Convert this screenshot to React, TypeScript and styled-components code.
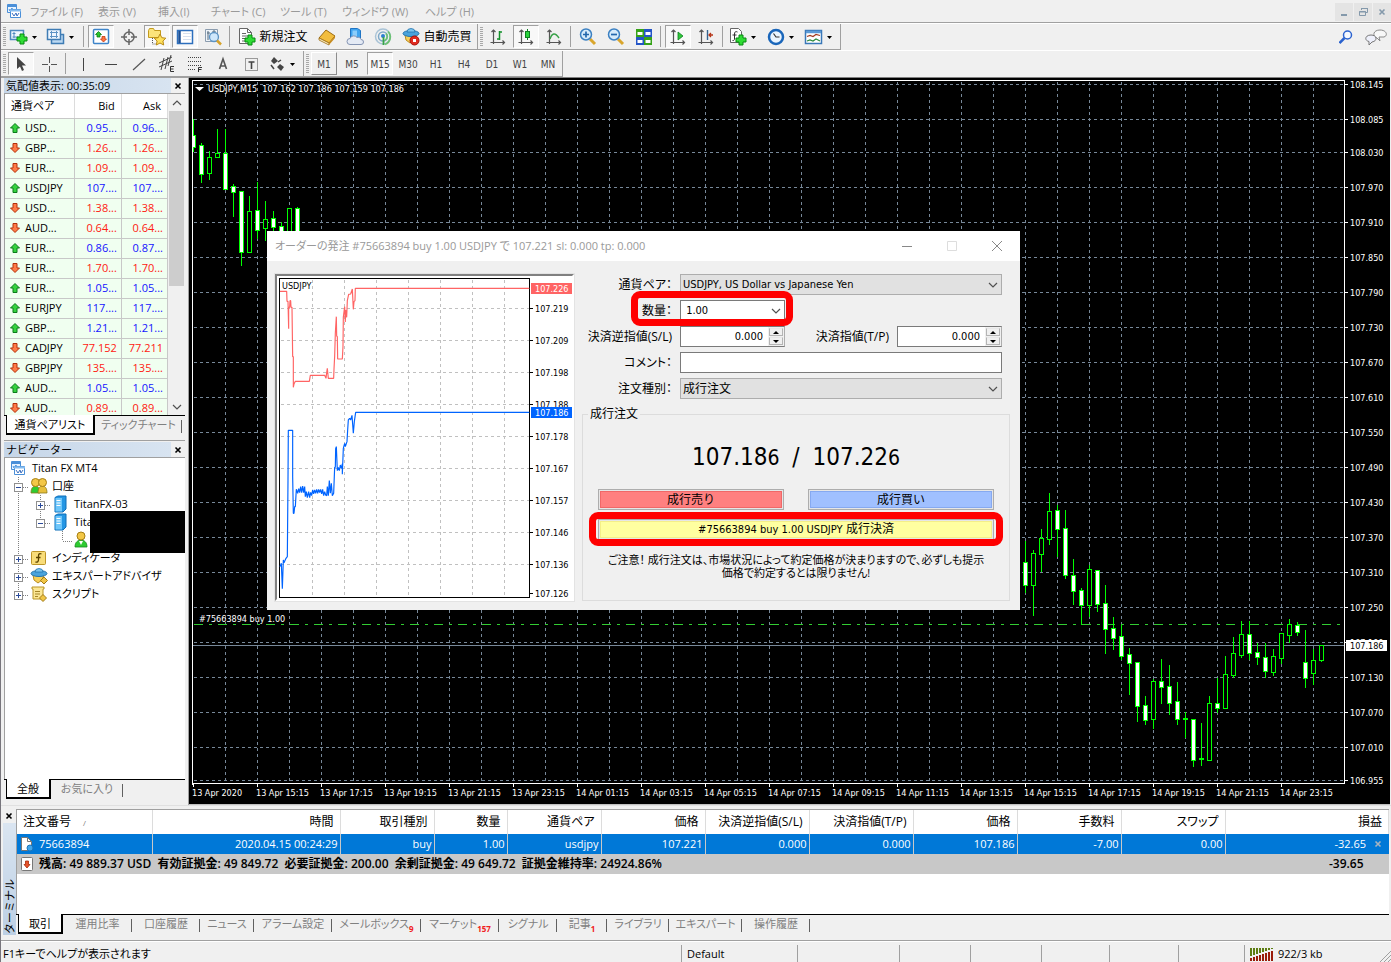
import React, { ReactNode } from "react";
import styled, { createGlobalStyle, css } from "styled-components";

const UI = `"Open Sans", "Noto Sans CJK JP", sans-serif`;
const TAHOMA = `"DejaVu Sans Condensed", "Noto Sans CJK JP", sans-serif`;

const GlobalStyle = createGlobalStyle`
  * { box-sizing: border-box; }
  body { margin: 0; background: #f0f0f0; color: #000; font: 12px/16px ${UI}; font-feature-settings: "palt"; overflow: hidden; }
  button, input, select { font: inherit; font-feature-settings: inherit; color: inherit; margin: 0; }
  svg { display: block; flex: none; }
`;

/* ---------- Shell ---------- */

const Shell = styled.div`
  display: flex;
  flex-direction: column;
  height: 100vh;
  border-left: 1px solid #77757c;
`;

const MenuBar = styled.nav`
  display: flex;
  align-items: center;
  height: 23px;
  padding-left: 5px;
  border-bottom: 1px solid #a0a0a0;
`;

const MenuItem = styled.button<{ $w: number }>`
  width: ${(p) => p.$w}px;
  padding: 2px 0 0;
  border: 0;
  background: none;
  color: #9a9a9a;
  font-size: 11px;
  text-align: left;
  white-space: nowrap;
`;

const MenuIcon = styled.span`
  width: 24px;
`;

const WindowButtons = styled.div`
  display: flex;
  gap: 1px;
  margin-left: auto;
  padding-top: 2px;
`;

const WindowButton = styled.button`
  display: grid;
  place-items: center;
  width: 18px;
  height: 18px;
  padding: 0;
  border: 0;
  background: #e4e4e4;
`;

const ToolRow = styled.div`
  display: flex;
  height: 27px;
  border-top: 1px solid #fff;
`;

const ToolBar = styled.div`
  display: flex;
  align-items: center;
  border-right: 1px solid #a0a0a0;
  border-bottom: 1px solid #a0a0a0;
`;

const Grip = styled.span`
  width: 3px;
  height: 19px;
  margin: 0 1px 0 2px;
  background: repeating-linear-gradient(#a8a8a8 0 1px, #f0f0f0 1px 2px);
`;

const Divider = styled.span`
  width: 1px;
  height: 21px;
  margin: 0 3px 0 2px;
  background: #a0a0a0;
`;

const ToolButton = styled.button<{ $w?: number; $pressed?: boolean; $raised?: boolean; $menu?: boolean }>`
  display: flex;
  align-items: center;
  justify-content: ${(p) => (p.$menu ? "flex-start" : "center")};
  gap: 3px;
  width: ${(p) => p.$w ?? (p.$menu ? 36 : 26)}px;
  height: 23px;
  margin: 0 1px;
  padding: 0;
  border: 1px solid transparent;
  background: none;
  white-space: nowrap;
  ${(p) => p.$pressed && css`
    background: #f8f8f8;
    border-color: #a0a0a0 #fff #fff #a0a0a0;
  `}
  ${(p) => p.$raised && css`
    border-color: #fff #8c8c8c #8c8c8c #fff;
  `}
`;

const PeriodButton = styled(ToolButton)`
  padding-top: 2px;
  color: #444;
  font: 10px/14px ${TAHOMA};
`;

const RowTools = styled.div`
  display: flex;
  align-items: center;
  gap: 12px;
  margin-left: auto;
  padding-right: 4px;
`;

const PlainButton = styled.button`
  padding: 0;
  border: 0;
  background: none;
`;

const Main = styled.main`
  display: flex;
  flex: 1;
  min-height: 0;
`;

/* ---------- Side panes ---------- */

const Side = styled.aside`
  display: flex;
  flex-direction: column;
  width: 188px;
  padding: 0 3px;
  border-top: 1px solid #a0a0a0;
  border-right: 1px solid #a0a0a0;
`;

const Pane = styled.section<{ $grow?: boolean }>`
  display: flex;
  flex-direction: column;
  position: relative;
  min-height: 0;
  ${(p) => (p.$grow ? css`flex: 1; padding-bottom: 5px;` : css`height: 363px; border-bottom: 1px solid #a0a0a0; margin-bottom: 1px; padding-bottom: 4px;`)}
`;

const PaneTitle = styled.h2`
  display: flex;
  align-items: center;
  height: 15px;
  margin: 0;
  font: 11px/15px ${UI};
`;

const PaneTitleText = styled.span`
  flex: 1;
  padding-left: 2px;
  background: linear-gradient(90deg, #c6d6e8, #d8e4f1);
  white-space: nowrap;
`;

const CloseMark = styled.button`
  display: grid;
  place-items: center;
  width: 14px;
  height: 14px;
  padding: 0;
  border: 0;
  background: none;
`;

const PaneBody = styled.div`
  display: flex;
  align-items: flex-start;
  flex: 1;
  min-height: 0;
  overflow: hidden;
  background: #fff;
  border-top: 1px solid #a0a0a0;
  border-left: 1px solid #a0a0a0;
`;

const Quotes = styled.table`
  flex: 1;
  table-layout: fixed;
  border-collapse: collapse;
  width: 163px;
  font-size: 11px;
`;

const QuoteHead = styled.th<{ $w: number; $left?: boolean }>`
  width: ${(p) => p.$w}px;
  height: 24px;
  padding: 0 6px;
  border-right: 1px solid #dcdcdc;
  border-bottom: 1px solid #c8c8c8;
  font-weight: 400;
  text-align: ${(p) => (p.$left ? "left" : "right")};
`;

const QuoteCell = styled.td<{ $tone?: "up" | "down" }>`
  height: 20px;
  padding: 0 4px 0 0;
  border-right: 1px solid #c8c8c8;
  border-bottom: 1px solid #c8c8c8;
  background: #f0fff0;
  color: ${(p) => (p.$tone === "up" ? "#1414ff" : p.$tone === "down" ? "#ff2010" : "#000")};
  line-height: 14px;
  text-align: ${(p) => (p.$tone ? "right" : "left")};
`;

const Symbol = styled.span`
  display: flex;
  align-items: center;
  gap: 4px;
  padding-left: 4px;
`;

const ScrollBar = styled.div`
  display: flex;
  flex-direction: column;
  align-items: center;
  align-self: stretch;
  width: 17px;
  background: #f0f0f0;
`;

const ScrollThumb = styled.div`
  width: 15px;
  height: 175px;
  margin-bottom: auto;
  background: #cdcdcd;
`;

const ScrollArrow = styled.button`
  display: grid;
  place-items: center;
  width: 17px;
  height: 17px;
  padding: 0;
  border: 0;
  background: none;
`;

const TabStrip = styled.div`
  display: flex;
  height: 21px;
  padding-left: 2px;
  background: linear-gradient(#000 0 1px, #f0f0f0 1px);
`;

const Tab = styled.button<{ $w: number; $active?: boolean }>`
  display: flex;
  align-items: center;
  justify-content: center;
  position: relative;
  width: ${(p) => p.$w}px;
  height: 20px;
  padding: 0;
  border: 0;
  background: none;
  color: #808080;
  font-size: 11px;
  line-height: 16px;
  white-space: nowrap;
  &::after {
    content: "";
    position: absolute;
    right: 0;
    top: 5px;
    height: 13px;
    border-right: 1px solid #606060;
  }
  ${(p) => p.$active && css`
    padding-top: 2px;
    background: #fff;
    color: #000;
    border: 1px solid #000;
    border-width: 0 2px 2px 1px;
    &::after { display: none; }
  `}
`;

const TabCount = styled.sub`
  align-self: flex-end;
  color: #f02020;
  font: 700 8px/10px ${UI};
`;

const Tree = styled.ul`
  flex: 1;
  margin: 0;
  padding: 1px 0 0 3px;
  list-style: none;
`;

const TreeRow = styled.li`
  display: flex;
  align-items: center;
  height: 18px;
  font-size: 11px;
  white-space: nowrap;
`;

const TreeText = styled.span`
  padding-left: 4px;
`;

const RootIcon = styled.span`
  padding: 0 2px;
`;

const Redaction = styled.div`
  position: absolute;
  top: 69px;
  left: 86px;
  right: 0;
  height: 42px;
  background: #000;
`;

/* ---------- Chart ---------- */

const ChartPane = styled.section`
  position: relative;
  flex: 1;
  min-width: 0;
  margin-right: 1px;
  background: #000;
  border-top: 1px solid #808080;
  border-bottom: 1px solid #c0c0c0;
`;

const ChartSvg = styled.svg`
  width: 100%;
  height: 100%;
  font: 9px ${TAHOMA};
  fill: #fff;
`;

/* ---------- Order dialog ---------- */

const Dialog = styled.section`
  position: absolute;
  left: 78px;
  top: 153px;
  width: 753px;
  background: #f0f0f0;
`;

const DialogTitle = styled.header`
  display: flex;
  align-items: center;
  height: 30px;
  padding: 0 16px 0 8px;
  background: #fff;
  color: #999;
  font-size: 11px;
`;

const DialogName = styled.h1`
  flex: 1;
  margin: 0;
  font: inherit;
`;

const DialogControls = styled.div`
  display: flex;
  gap: 31px;
`;

const DialogBody = styled.form`
  display: grid;
  grid-template-columns: 299px 1fr;
  column-gap: 8px;
  padding: 13px 10px 9px 8px;
  font-size: 11px;
`;

const TickPane = styled.div`
  border: 2px solid;
  border-color: #808080 #fff #fff #808080;
  outline: 1px solid #e3e3e3;
  background: #fff;
`;

const TickSvg = styled.svg`
  width: 100%;
  height: 323px;
  font: 9px ${TAHOMA};
`;

const OrderSide = styled.div`
  display: flex;
  flex-direction: column;
`;

const Fields = styled.div`
  display: grid;
  grid-template-columns: 90px 105px 1fr 105px;
  grid-auto-rows: 21px;
  gap: 5px 8px;
  padding-right: 8px;
  margin-bottom: 8px;
  position: relative;
`;

const FieldLabel = styled.label<{ $start?: boolean }>`
  ${(p) => p.$start && css`grid-column: 1;`}
  align-self: center;
  text-align: right;
  font-size: 12px;
  white-space: nowrap;
`;

const Picker = styled.span<{ $wide?: boolean; $plain?: boolean }>`
  display: grid;
  align-items: center;
  grid-column: ${(p) => (p.$wide ? "2 / 5" : "2")};
  background: ${(p) => (p.$plain ? "#fff" : "#e1e1e1")};
  border: 1px solid ${(p) => (p.$plain ? "#7a7a7a" : "#adadad")};
  > * { grid-area: 1 / 1; }
  > svg { justify-self: end; margin-right: 3px; pointer-events: none; }
`;

const PickerSelect = styled.select<{ $small?: boolean }>`
  appearance: none;
  width: 100%;
  height: 19px;
  padding: 0 2px;
  border: 0;
  background: none;
  font: ${(p) => (p.$small ? 11 : 12)}px/16px ${TAHOMA};
`;

const TextInput = styled.input`
  grid-column: 2 / 5;
  padding: 0 4px;
  border: 1px solid #7a7a7a;
  background: #fff;
`;

const Spinner = styled.span`
  display: flex;
  background: #fff;
  border: 1px solid #7a7a7a;
  border-right-color: #adadad;
`;

const SpinInput = styled.input`
  flex: 1;
  width: 0;
  min-width: 0;
  padding: 0 5px;
  border: 0;
  background: none;
  font: 11px/16px ${TAHOMA};
  text-align: right;
`;

const SpinButtons = styled.span`
  display: grid;
  grid-template-rows: 1fr 1fr;
  gap: 1px;
  width: 16px;
  padding: 1px;
  background: #f0f0f0;
`;

const SpinButton = styled.button`
  display: grid;
  place-items: center;
  padding: 0;
  min-height: 0;
  border: 1px solid #b4b4b4;
  border-top-color: #e8e8e8;
  background: #f0f0f0;
`;

const OrderGroup = styled.fieldset`
  flex: 1;
  margin: 0;
  padding: 19px 15px 0;
  border: 1px solid #dcdcdc;
`;

const OrderLegend = styled.legend`
  margin-left: -10px;
  padding: 0 2px;
  font-size: 12px;
  line-height: 14px;
`;

const Quote = styled.p`
  margin: 0;
  padding-bottom: 14px;
  text-align: center;
  font: 24px/34px ${TAHOMA};
  small { font-size: 21px; }
`;

const Slash = styled.span`
  padding: 0 6px;
`;

const DealRow = styled.div`
  display: grid;
  grid-template-columns: 1fr 1fr;
  gap: 24px;
  margin-bottom: 9px;
`;

const DealButton = styled.button<{ $tone: string; $edge: string }>`
  width: 100%;
  height: 21px;
  padding: 0;
  border: 1px solid #adadad;
  box-shadow: inset 0 0 0 1px #e6e6e6, inset 0 0 0 2px ${(p) => p.$edge};
  background: ${(p) => p.$tone};
  font: 12px/16px ${TAHOMA};
`;

const Latin = styled.span`
  font-size: 11px;
`;

const CloseDeal = styled.div`
  position: relative;
`;

const Marker = styled.span`
  position: absolute;
  border: 7px solid #f00;
  border-radius: 9px;
  pointer-events: none;
`;

const VolumeMarker = styled(Marker)`
  left: 49px;
  top: 17px;
  width: 162px;
  height: 35px;
`;

const CloseMarker = styled(Marker)`
  inset: -7px -9px -6px -9px;
`;

const Caution = styled.p`
  margin: 13px 0 0;
  text-align: center;
  font-size: 11px;
  line-height: 13px;
  white-space: nowrap;
`;

/* ---------- Terminal ---------- */

const Terminal = styled.section`
  display: flex;
  height: 135px;
  padding: 3px 2px 5px 1px;
  border-top: 1px solid #e0e0e0;
`;

const TerminalRail = styled.div`
  display: flex;
  flex-direction: column;
  align-items: center;
  width: 14px;
`;

const TerminalName = styled.h2`
  flex: 1;
  width: 13px;
  margin: 0;
  padding-top: 1px;
  background: linear-gradient(#bccfe4, #dae5f1);
  writing-mode: vertical-rl;
  text-orientation: sideways;
  transform: rotate(180deg);
  font: 11px/13px ${UI};
  text-align: left;
`;

const TerminalBody = styled.div`
  display: flex;
  flex-direction: column;
  flex: 1;
  min-width: 0;
  border-top: 1px solid #a0a0a0;
`;

const TradeArea = styled.div`
  flex: 1;
  min-height: 0;
  background: #fff;
  border-left: 1px solid #a0a0a0;
`;

const Trades = styled.table`
  width: 100%;
  table-layout: fixed;
  border-collapse: collapse;
  font-size: 11px;
`;

const TradeHead = styled.th<{ $left?: boolean }>`
  height: 24px;
  padding: 0 6px;
  border-right: 1px solid #dcdcdc;
  font-size: 12px;
  font-weight: 400;
  text-align: ${(p) => (p.$left ? "left" : "right")};
  white-space: nowrap;
`;

const TradeCell = styled.td<{ $last?: boolean; $left?: boolean }>`
  height: 20px;
  padding: 0 ${(p) => (p.$last ? 6 : 2)}px 0 3px;
  background: #0078d7;
  color: #fff;
  border-right: 1px solid ${(p) => (p.$last ? "#0078d7" : "#c8c8c8")};
  text-align: ${(p) => (p.$left ? "left" : "right")};
`;

const TotalCell = styled.td<{ $right?: boolean }>`
  height: 20px;
  padding: 0 ${(p) => (p.$right ? 25 : 0)}px 0 3px;
  background: #c8c8c8;
  font-size: 12px;
  font-weight: 600;
  text-align: ${(p) => (p.$right ? "right" : "left")};
`;

const CellContent = styled.span<{ $end?: boolean }>`
  display: flex;
  align-items: center;
  justify-content: ${(p) => (p.$end ? "flex-end" : "flex-start")};
  gap: ${(p) => (p.$end ? 8 : 5)}px;
  white-space: pre;
`;

const SortMark = styled.span`
  margin-left: 12px;
  color: #808080;
  font-size: 8px;
`;

const StatusBar = styled.footer`
  display: flex;
  align-items: stretch;
  height: 22px;
  border-top: 1px solid #a0a0a0;
  padding: 4px 0 0 2px;
  box-shadow: inset 0 1px #fff;
`;

const StatusCell = styled.span<{ $w?: number }>`
  display: flex;
  align-items: center;
  gap: 4px;
  ${(p) => (p.$w ? css`width: ${p.$w}px; padding-left: 5px; border-left: 1px solid #a0a0a0;` : css`flex: 1;`)}
  font-size: 11px;
  white-space: nowrap;
`;

const SizeGrip = styled.span`
  margin: auto 0 0 auto;
`;

/* ---------- Icons ---------- */

const Svg = ({ w = 20, h = 20, children }: { w?: number; h?: number; children: ReactNode }) => (
  <svg width={w} height={h} viewBox={`0 0 ${w} ${h}`} fill="none" aria-hidden="true">{children}</svg>
);

const Plus = ({ x, y }: { x: number; y: number }) => (
  <path d={`M${x + 3} ${y}h4v3h3v4h-3v3h-4v-3h-3v-4h3z`} fill="#2fdc34" stroke="#078a10" />
);

const Caret = () => <Svg w={6} h={20}><path d="M0 9h5l-2.500 3z" fill="#000" /></Svg>;

const AppIcon = () => (
  <Svg w={16} h={16}>
    <path d="M1.500 1.500h9v8h-9z" fill="#e8f3ff" stroke="#4a8fd8" /><path d="M1 3h10" stroke="#4a8fd8" strokeWidth="2" />
    <path d="M3 6l1 2 2-3 1 3" stroke="#4a8fd8" />
    <path d="M4.500 6.500h10v8h-10z" fill="#fff" stroke="#4a8fd8" /><path d="M4 7.500h11" stroke="#86bdf0" strokeWidth="2" />
    <path d="M6 10l2 3 2-3 1 3 2-3" stroke="#3a6fc0" />
  </Svg>
);
const NewChart = () => (
  <Svg><path d="M1.500 3.500h13v9h-13z" fill="#eef6ff" stroke="#4d88bf" strokeWidth="1.500" /><path d="M5 5v6M3.500 6.500h3M3.500 10h6" stroke="#4d88bf" /><Plus x={8} y={7} /></Svg>
);
const Profiles = () => (
  <Svg><path d="M5.500 7.500h12v9h-12z" fill="#bcd9f2" stroke="#3f7cb4" strokeWidth="1.500" /><path d="M1.500 2.500h13v10h-13z" fill="#eef6ff" stroke="#3f7cb4" strokeWidth="1.500" /><path d="M4 5.500h8M4 9.500h8M5.500 4v7M10.500 4v7" stroke="#5d93c5" /></Svg>
);
const WatchIcon = () => (
  <Svg><rect x="2.500" y="2.500" width="15" height="14" rx="1" fill="#fff" stroke="#3d84c9" strokeWidth="1.500" />
    <path d="M7.500 4.500l3 3h-1.500V10H6V7.500H4.500z" fill="#29c52d" stroke="#0b7c12" strokeWidth=".8" /><path d="M12.500 15l-3-3H11V9.500h3V12h1.500z" fill="#ff7440" stroke="#c33a10" strokeWidth=".8" /></Svg>
);
const CrossCircle = () => (
  <Svg><circle cx="10" cy="10" r="5" stroke="#666" strokeWidth="1.500" /><path d="M10 2v6M10 12v6M2 10h6M12 10h6" stroke="#666" strokeWidth="1.500" /></Svg>
);
const NavIcon = () => (
  <Svg><path d="M1.500 3.500l1-2h4l1 2h6v7h-12z" fill="#fbe37a" stroke="#c39a1d" /><path d="M5.500 11v6h4" stroke="#555" strokeDasharray="1 1" />
    <path d="M13 7l1.800 3.700 4 .5-2.900 2.800.8 4-3.700-2-3.700 2 .8-4-2.900-2.800 4-.5z" fill="#ffe15e" stroke="#b98a12" /></Svg>
);
const TerminalIcon = () => (
  <Svg><rect x="2.500" y="3.500" width="15" height="13" fill="#fff" stroke="#2d6fbd" strokeWidth="1.500" /><path d="M4.500 4v12" stroke="#1b4f95" strokeWidth="2.500" /><path d="M8 6.500h8M8 9.500h8M8 12.500h8" stroke="#d6e0ee" /></Svg>
);
const Tester = () => (
  <Svg><path d="M2.500 2.500h12v12h-12z" fill="#eef3f8" stroke="#8b9cae" /><path d="M5 4v9M4 6h3M11 3v4M9 5h4" stroke="#53687d" /><circle cx="11" cy="10" r="4.500" fill="#cbe6fb" fillOpacity=".9" stroke="#5c93c4" strokeWidth="1.300" /><path d="M14 13.500l4 4" stroke="#d6a22a" strokeWidth="2.500" /></Svg>
);
const OrderIcon = () => (
  <Svg w={18}><path d="M1.500 1.500h8l4 4v11h-12z" fill="#fff" stroke="#666" /><path d="M9.500 1.500v4h4M4 6.500h4M4 9h7M4 11.500h6M4 14h4" stroke="#666" /><Plus x={7} y={8} /></Svg>
);
const Book = () => (
  <Svg><path d="M2 11l7-8 9 6-6 7z" fill="#f2bd3e" stroke="#9c6b10" /><path d="M2 11l10 5v2L2 13z" fill="#fff1c2" stroke="#9c6b10" strokeWidth=".8" /><path d="M12 16l6-7v2l-6 7z" fill="#c98b1c" /></Svg>
);
const Cloud = () => (
  <Svg><path d="M5.500 1.500h7l3 2v8h-10z" fill="#3fa3ef" stroke="#1f74c4" /><path d="M7.500 3.500h4.500v6H7.500z" fill="#8bcdfb" /><path d="M5 17.500a3 3 0 010-6 4 4 0 017-1 3 3 0 014 2 2.500 2.500 0 010 5z" fill="#e4eaf4" stroke="#8494b3" /></Svg>
);
const Signal = () => (
  <Svg><circle cx="10" cy="9.500" r="7.500" stroke="#a9c3d6" strokeWidth="1.500" /><circle cx="10" cy="9.500" r="4.500" stroke="#7fa9c9" strokeWidth="1.500" /><path d="M12 17.500a8 8 0 003-13M12 13.500a5 5 0 001-7" stroke="#6cc272" strokeWidth="1.800" /><circle cx="10" cy="9" r="2" fill="#2c7fd0" /><path d="M10.500 10v8" stroke="#39a545" strokeWidth="1.800" /></Svg>
);
const Expert = ({ stop }: { stop?: boolean }) => (
  <Svg w={18} h={stop ? 20 : 18}><path d="M3 8h11l-2 5-4 3-4-3z" fill="#f6cf58" stroke="#b98c1d" /><ellipse cx="9" cy="6.500" rx="8" ry="3" fill="#4aa3dc" stroke="#2374ad" /><path d="M5 5a4 3.500 0 018 0z" fill="#7cc5ee" stroke="#2374ad" strokeWidth=".8" />
    {stop ? <><circle cx="12.500" cy="13.500" r="4.500" fill="#e02b20" stroke="#a80f08" /><path d="M11 12h3v3h-3z" fill="#fff" /></> : <path d="M14 10l3.500 3.500L14 17l-3.500-3.500z" fill="#f0c545" stroke="#a47c17" />}</Svg>
);
const Axes = ({ children }: { children?: ReactNode }) => (
  <Svg><path d="M5.500 3v14M2.500 15.500h14M3.500 5l2-2 2 2M14.500 13.500l2 2-2 2" stroke="#555" strokeWidth="1.200" />{children}</Svg>
);
const BarsIcon = () => <Axes><path d="M11.500 4v9M9 12h2.500M11.500 5H14" stroke="#12902a" strokeWidth="1.500" /></Axes>;
const CandleIcon = () => <Axes><path d="M11.500 2v11" stroke="#0d7f20" /><rect x="9.500" y="4.500" width="4" height="6" fill="#29d33b" stroke="#0d7f20" /></Axes>;
const LineIcon = () => <Axes><path d="M6 12c2-6 5-7 9-1" stroke="#36a046" strokeWidth="1.400" /></Axes>;
const Lens = ({ plus }: { plus?: boolean }) => (
  <Svg><path d="M12 12l5 5" stroke="#d9a62d" strokeWidth="3" /><circle cx="8" cy="7.500" r="5.500" fill="#d6ebfb" stroke="#3b80c2" strokeWidth="1.500" /><path d={plus ? "M5 7.500h6M8 4.500v6" : "M5 7.500h6"} stroke="#2468ad" strokeWidth="1.700" /></Svg>
);
const Tiles = () => (
  <Svg><path d="M2 2h8v8H2zM10 10h8v8h-8z" fill="#36a318" /><path d="M10 2h8v8h-8zM2 10h8v8H2z" fill="#2455c7" /><path d="M3.500 5h5v3h-5zM11.500 5h5v3h-5zM3.500 13h5v3h-5zM11.500 13h5v3h-5z" fill="#fff" /></Svg>
);
const ScrollIcon = () => <Axes><path d="M10 5l5 4-5 4z" fill="#2fc83a" stroke="#0d7f20" strokeWidth=".8" /></Axes>;
const ShiftIcon = () => <Axes><path d="M11.500 3v10" stroke="#33638f" strokeWidth="1.400" /><path d="M17 8h-4M15 6l-2 2 2 2" stroke="#b53316" strokeWidth="1.300" /></Axes>;
const Indicators = () => (
  <Svg><path d="M2.500 1.500h8l3 3v11h-11z" fill="#fff" stroke="#666" /><path d="M9.500 5c-2-1-3 0-3 2v5c0 1-1 2-2 1.500M4.500 8h4" stroke="#333" /><Plus x={8} y={8} /></Svg>
);
const Clock = () => (
  <Svg><circle cx="10" cy="10" r="7" fill="#eaf5ff" stroke="#1a66ba" strokeWidth="2.500" /><path d="M7.500 6.500L10 10h3.500" stroke="#333" strokeWidth="1.200" /></Svg>
);
const Template = () => (
  <Svg><rect x="1.500" y="3.500" width="16" height="13" fill="#fff" stroke="#3a78b8" strokeWidth="1.500" /><path d="M2 5h15" stroke="#5c9ad6" strokeWidth="2.500" /><path d="M3 9.500l3-1 3 1 3-2 4 1" stroke="#a33a1e" strokeWidth="1.200" /><path d="M3 14l3-1 3 1 3-2 4 2" stroke="#2c8a3c" strokeWidth="1.200" /></Svg>
);
const Cursor = () => <Svg><path d="M6 3v12l3-2.500 2 4.500 2-1-2-4.500h4z" fill="#444" /></Svg>;
const Cross = () => <Svg><path d="M10.500 3v6M10.500 12v6M3 10.500h6M12 10.500h6" stroke="#555" /></Svg>;
const VLine = () => <Svg><path d="M10.500 4v13" stroke="#444" /></Svg>;
const HLine = () => <Svg><path d="M4 10.500h12" stroke="#444" /></Svg>;
const Trend = () => <Svg><path d="M4 16L16 5" stroke="#555" strokeWidth="1.200" /></Svg>;
const Channel = () => (
  <Svg><path d="M2 9l13-6M2 13l13-6M4 16l3-12M8 15l3-12M11 12l3-11" stroke="#444" /><path d="M17 12.500h-3.500v5H17M13.500 15h3" stroke="#333" /></Svg>
);
const Fibo = () => (
  <Svg><path d="M3 3.500h13M3 7.500h13M3 11.500h13M3 15.500h8" stroke="#444" strokeDasharray="1 1" /><path d="M17 13.500h-3.500V18M13.500 15.500h3" stroke="#333" /></Svg>
);
const TextIcon = () => <Svg><path d="M6.500 15l3.500-10 3.500 10M7.500 12h5" stroke="#555" strokeWidth="1.600" /></Svg>;
const LabelIcon = () => <Svg><path d="M4.500 4.500h12v12h-12z" stroke="#444" strokeDasharray="1 1" /><path d="M7.500 8h6M10.500 8v7" stroke="#444" strokeWidth="1.600" /></Svg>;
const Arrows = () => (
  <Svg><path d="M7 3l4 4-4 3-3-3zM14 17l-4-4 3-3 4 3z" fill="#444" /><path d="M4 11l3 4M11 8l3-2" stroke="#444" strokeWidth="1.500" /></Svg>
);
const Search = () => (
  <Svg w={14} h={14}><circle cx="8.500" cy="5" r="4" fill="#f4f8ff" stroke="#2a62cf" strokeWidth="1.500" /><path d="M5.500 8l-5 5" stroke="#2a62cf" strokeWidth="2.500" /></Svg>
);
const Chat = () => (
  <Svg w={22} h={18}><path d="M14 10l1 4-3-3c-5-2-4-8 3-8s8 6 4 7z" fill="#f8f8f8" stroke="#8a8a8a" transform="translate(0 -1)" /><path d="M4 17v-3.500c-5-1-4-6.500 2-6.500s7 6 1 7z" fill="#eef0fb" stroke="#777" /></Svg>
);
const Cross8 = ({ color = "#000" }: { color?: string }) => <Svg w={8} h={8}><path d="M1.500 1.500l5 5M6.500 1.500l-5 5" stroke={color} strokeWidth="1.600" /></Svg>;
const ArrowMark = ({ up }: { up?: boolean }) => (
  <Svg w={12} h={12}>
    {up ? <path d="M6 1.500l4.500 4.500H8v4.500H4V6H1.500z" fill="#35d23f" stroke="#0a7a1a" /> : <path d="M6 10.500L1.500 6H4V1.500h4V6h2.500z" fill="#ff7b48" stroke="#b3300b" />}
  </Svg>
);
const Chevron = ({ up, size = 10 }: { up?: boolean; size?: number }) => (
  <Svg w={size} h={size}><path d={up ? `M1 ${size - 3}l${size / 2 - 1}-4 ${size / 2 - 1} 4` : `M1 3l${size / 2 - 1} 4 ${size / 2 - 1}-4`} stroke="#505050" strokeWidth="1.200" /></Svg>
);
const Triangle = ({ up }: { up?: boolean }) => <Svg w={6} h={3}><path d={up ? "M0 3h6L3 0z" : "M0 0h6L3 3z"} fill="#000" /></Svg>;

const person = (x: number, body: string) => (
  <g><path d={`M${x} 16c0-5 2-7 4.500-7s4.500 2 4.500 7z`} fill={body} stroke="#8a7a1a" strokeWidth=".8" /><circle cx={x + 4.500} cy="5.500" r="4" fill="#f3c747" stroke="#a67f14" /></g>
);
const Users = () => <Svg w={18} h={18}>{person(1, "#2ecb32")}{person(8, "#e7bf3c")}</Svg>;
const User = () => (
  <Svg w={18} h={18}><path d="M1 16c0-5 3-7 6-7s6 2 6 7z" fill="#2ecb32" stroke="#148a1c" strokeWidth=".8" /><path d="M5 10l2 4 2-4" fill="#fff" /><circle cx="7" cy="5" r="4" fill="#f3c747" stroke="#a67f14" /></Svg>
);
const Server = () => (
  <Svg w={18} h={18}><path d="M3 2.500l3-1.500h8v13l-3 3H3z" fill="#2496e4" stroke="#0f6fb8" /><path d="M3.500 3H10v13.500H3.500z" fill="#6ec6fa" /><path d="M4.500 5.500h4M4.500 8h4M4.500 10.500h4" stroke="#fff" /></Svg>
);
const FuncIcon = () => (
  <Svg w={18} h={18}><rect x="1.500" y="2.500" width="14" height="13" rx="1" fill="#f8dc79" stroke="#bd9528" /><path d="M11.500 5c-2-1-3 0-3 2v3.500c0 2-1 3-3 2.500M6 8.500h4.500" stroke="#5b4300" strokeWidth="1.300" /></Svg>
);
const Script = () => (
  <Svg w={18} h={18}><path d="M2 2h12v2h-1v10H3V4H2z" fill="#fbe694" stroke="#b99527" /><path d="M5 6.500h5M5 9h5M5 11.500h3" stroke="#a4852a" /><path d="M13 9.500l3.500 3.500-3.500 3.500L9.500 13z" fill="#f0c545" stroke="#a47c17" /></Svg>
);
const DocIcon = () => (
  <Svg w={14} h={16}><path d="M1.500 1.500h6l4 4v9h-10z" fill="#fff" stroke="#777" /><path d="M7.500 1.500v4h4" stroke="#777" /><circle cx="10" cy="12" r="3" fill="#3fa5ea" stroke="#1c75bb" /></Svg>
);
const BalanceIcon = () => (
  <Svg w={14} h={16}><rect x="1.500" y="1.500" width="11" height="13" rx="1" fill="#fff" stroke="#777" /><path d="M7 12L4 8.500h1.500V5h3v3.500H10z" fill="#e8532a" stroke="#a82c0a" strokeWidth=".8" /></Svg>
);
const Traffic = () => (
  <Svg w={24} h={14}>
    {Array.from({ length: 8 }, (_, i) => (
      <g key={i}><path d={`M${i * 3 + 1} 1v${8 - i}`} stroke="#5c7d12" strokeWidth="2" /><path d={`M${i * 3 + 1} ${11 - i}V14`} stroke="#9a1c0a" strokeWidth="2" /></g>
    ))}
  </Svg>
);

/* ---------- Data ---------- */

const menus: [string, number][] = [["ファイル (F)", 68], ["表示 (V)", 60], ["挿入(I)", 53], ["チャート (C)", 69], ["ツール (T)", 62], ["ウィンドウ (W)", 83], ["ヘルプ (H)", 60]];

const quotes: [string, string, string, boolean][] = [
  ["USD...", "0.95...", "0.96...", true], ["GBP...", "1.26...", "1.26...", false], ["EUR...", "1.09...", "1.09...", false],
  ["USDJPY", "107....", "107....", true], ["USD...", "1.38...", "1.38...", false], ["AUD...", "0.64...", "0.64...", false],
  ["EUR...", "0.86...", "0.87...", true], ["EUR...", "1.70...", "1.70...", false], ["EUR...", "1.05...", "1.05...", true],
  ["EURJPY", "117....", "117....", true], ["GBP...", "1.21...", "1.21...", true], ["CADJPY", "77.152", "77.211", false],
  ["GBPJPY", "135....", "135....", false], ["AUD...", "1.05...", "1.05...", true], ["AUD...", "0.89...", "0.89...", false],
];

const prices: [number, string][] = [
  [84, "108.145"], [119, "108.085"], [152, "108.030"], [187, "107.970"], [222, "107.910"], [257, "107.850"], [292, "107.790"],
  [327, "107.730"], [362, "107.670"], [397, "107.610"], [432, "107.550"], [467, "107.490"], [502, "107.430"], [537, "107.370"],
  [572, "107.310"], [607, "107.250"], [642, "107.190"], [677, "107.130"], [712, "107.070"], [747, "107.010"], [780, "106.955"],
];
const times = [
  "13 Apr 2020", "13 Apr 15:15", "13 Apr 17:15", "13 Apr 19:15", "13 Apr 21:15", "13 Apr 23:15", "14 Apr 01:15", "14 Apr 03:15", "14 Apr 05:15",
  "14 Apr 07:15", "14 Apr 09:15", "14 Apr 11:15", "14 Apr 13:15", "14 Apr 15:15", "14 Apr 17:15", "14 Apr 19:15", "14 Apr 21:15", "14 Apr 23:15",
];
/* x, high, low, body top, body bottom, falling */
const candles: [number, number, number, number, number, number][] = [
  [193, 118, 151, 135, 147, 1], [201, 142, 182, 145, 174, 1], [209, 150, 179, 157, 173, 0], [217, 128, 157, 153, 157, 0],
  [225, 128, 189, 153, 189, 1], [233, 183, 216, 186, 192, 1], [241, 191, 265, 191, 252, 1], [249, 195, 252, 211, 252, 0],
  [257, 181, 238, 210, 230, 1], [265, 200, 240, 219, 228, 0], [273, 210, 230, 218, 227, 1], [281, 221, 240, 226, 238, 1],
  [289, 208, 240, 208, 238, 0], [297, 206, 240, 208, 238, 1],
  [1025, 540, 592, 562, 585, 1], [1033, 549, 615, 553, 585, 0], [1041, 528, 571, 538, 554, 0], [1049, 492, 544, 511, 539, 0],
  [1057, 504, 556, 510, 529, 1], [1065, 509, 578, 528, 575, 1], [1073, 558, 604, 575, 591, 1], [1081, 587, 624, 590, 605, 1],
  [1089, 564, 616, 569, 605, 0], [1097, 569, 611, 570, 604, 1], [1105, 584, 653, 603, 629, 1], [1113, 616, 649, 628, 638, 1],
  [1121, 624, 659, 636, 656, 1], [1129, 647, 694, 654, 663, 1], [1137, 662, 721, 662, 706, 1], [1145, 695, 724, 705, 720, 1],
  [1153, 678, 728, 681, 719, 0], [1161, 658, 703, 681, 687, 1], [1169, 664, 714, 686, 703, 1], [1177, 681, 724, 701, 719, 1],
  [1185, 711, 737, 718, 719, 0], [1193, 719, 766, 719, 760, 1], [1201, 722, 765, 758, 759, 0], [1209, 695, 760, 703, 760, 0],
  [1217, 677, 712, 703, 708, 1], [1225, 655, 708, 674, 708, 0], [1233, 636, 677, 653, 675, 0], [1241, 620, 657, 634, 655, 0],
  [1249, 620, 659, 634, 653, 1], [1257, 642, 664, 652, 657, 1], [1265, 642, 677, 657, 671, 1], [1273, 648, 675, 656, 672, 0],
  [1281, 633, 663, 633, 658, 0], [1289, 618, 642, 624, 635, 0], [1297, 621, 635, 625, 632, 1], [1305, 629, 687, 662, 678, 1],
  [1313, 648, 684, 660, 673, 0], [1321, 645, 661, 645, 660, 0],
];

const tickLabels: [number, string][] = [
  [308, "107.219"], [340, "107.209"], [372, "107.198"], [404, "107.188"], [436, "107.178"], [468, "107.167"], [500, "107.157"],
  [532, "107.146"], [564, "107.136"], [593, "107.126"],
];
/* Tick series are stored at three units per pixel. */
const askTicks = "42,184 62,184 63,214 66,214 68,296 68,232 71,232 72,212 74,212 75,232 78,232 80,380 82,380 82,472 84,462 88,454 130,454 133,436 176,436 180,445 182,428 184,415 186,435 187,445 203,445 204,418 206,379 208,310 211,260 212,318 214,320 215,387 229,387 231,350 232,262 236,230 238,276 239,240 242,262 244,212 248,193 254,192 259,177 262,238 264,215 267,212 268,175 790,175";
const bidTicks = "42,1010 46,1000 49,1076 52,990 54,998 60,985 64,980 66,750 67,601 80,601 80,740 82,850 84,850 86,830 88,830 91,778 95,790 98,776 101,788 104,770 107,788 110,768 113,788 116,770 118,800 121,785 124,803 128,785 131,803 134,787 137,797 140,780 143,792 146,780 149,790 152,778 155,790 158,778 161,788 164,778 167,792 170,778 173,797 176,785 179,795 182,797 184,770 187,797 190,752 193,790 196,760 199,797 203,790 206,712 208,712 209,656 211,650 214,722 217,712 220,722 223,705 226,715 229,702 229,733 232,655 236,640 238,650 243,635 245,600 247,570 251,565 254,570 258,556 262,610 265,575 269,547 790,547";

const tradeColumns: [string, number | undefined][] = [
  ["注文番号", 135], ["時間", 188], ["取引種別", 94], ["数量", 73], ["通貨ペア", 94], ["価格", 104], ["決済逆指値(S/L)", 104],
  ["決済指値(T/P)", 104], ["価格", 104], ["手数料", 104], ["スワップ", 104], ["損益", undefined],
];
const tradeValues = ["2020.04.15 00:24:29", "buy", "1.00", "usdjpy", "107.221", "0.000", "0.000", "107.186", "-7.00", "0.00"];
const terminalTabs: [string, number, string?][] = [
  ["運用比率", 69], ["口座履歴", 68], ["ニュース", 54], ["アラーム設定", 78], ["メールボックス", 89, "9"], ["マーケット", 78, "157"],
  ["シグナル", 58], ["記事", 50, "1"], ["ライブラリ", 62], ["エキスパート", 73], ["操作履歴", 68],
];

/* ---------- Pieces ---------- */

const PriceChart = () => (
  <ChartSvg viewBox="189 78 1201 726" preserveAspectRatio="xMinYMin meet" role="img" aria-label="USDJPY,M15">
    <g transform="translate(.5 .5)" shapeRendering="crispEdges" fill="none">
      <g stroke="#778899" strokeDasharray="3 3">
        {Array.from({ length: 35 }, (_, i) => <path key={i} d={`M${225 + i * 32} 81V783`} />)}
        {prices.map(([y]) => <path key={y} d={`M193 ${y}H1344`} />)}
      </g>
      <path d="M192 645H1344" stroke="#778899" />
      <path d="M193 624H1340" stroke="#32cd32" strokeDasharray="9 6 3 6" />
      <g stroke="#00ff00">
        {candles.map(([x, high, low, top, bottom, falling]) => (
          <g key={x}>
            <path d={`M${x} ${high}V${low}`} />
            <rect x={x - 2} y={top} width="4" height={bottom - top} fill={falling ? "#fff" : "#000"} />
          </g>
        ))}
      </g>
      <path d="M190 78v726" stroke="#000" strokeWidth="3" />
      <path d="M192 784V80H1344V783H192" stroke="#fff" />
      <g stroke="#fff">
        {prices.map(([y]) => <path key={y} d={`M1344 ${y}h3`} />)}
        {times.map((t, i) => <path key={t} d={`M${193 + i * 64} 783v3`} />)}
      </g>
    </g>
    <path d="M195 87h9l-4.500 4z" />
    <text x="208" y="92" xmlSpace="preserve">{"USDJPY,M15  107.162 107.186 107.159 107.186"}</text>
    <text x="199" y="622">#75663894 buy 1.00</text>
    {prices.map(([y, label]) => <text key={y} x="1350" y={y + 4}>{label}</text>)}
    {times.map((t, i) => <text key={t} x={192 + i * 64} y="796">{t}</text>)}
    <rect x="1346" y="640" width="41" height="11" />
    <text x="1350" y="649" fill="#000">107.186</text>
  </ChartSvg>
);

const TickChart = () => (
  <TickSvg viewBox="277 276 295 323" preserveAspectRatio="xMinYMin meet" role="img" aria-label="USDJPY">
    <g transform="translate(.5 .5)" shapeRendering="crispEdges" fill="none">
      <g stroke="#c0c0c0" strokeDasharray="3 3">
        {[312, 344, 376, 408, 440, 472, 504].map((x) => <path key={x} d={`M${x} 279V597`} />)}
        {tickLabels.slice(0, 9).map(([y]) => <path key={y} d={`M280 ${y}H529`} />)}
      </g>
      <path d="M279 278H529V597H279z" stroke="#000" />
      <g stroke="#000">{tickLabels.map(([y]) => <path key={y} d={`M529 ${y}h3`} />)}</g>
    </g>
    <g transform="translate(266 230) scale(.3333)" fill="none" strokeWidth="3.500" strokeLinejoin="bevel">
      <polyline points={askTicks} stroke="#ff6464" />
      <polyline points={bidTicks} stroke="#0064ff" />
    </g>
    <text x="282" y="289">USDJPY</text>
    {tickLabels.map(([y, label]) => <text key={y} x="535" y={y + 4}>{label}</text>)}
    <rect x="531" y="283" width="41" height="11" fill="#ff6464" />
    <text x="535" y="292" fill="#fff">107.226</text>
    <rect x="531" y="407" width="41" height="11" fill="#0064ff" />
    <text x="535" y="416" fill="#fff">107.186</text>
  </TickSvg>
);

/* One 22px column of a tree row: trunk line, branch line and optional +/- box. */
const Guide = ({ trunk = "full", branch, sign }: { trunk?: "full" | "half" | "none"; branch?: boolean; sign?: "+" | "-" }) => (
  <svg width="22" height="18" viewBox="0 0 22 18" fill="none" shapeRendering="crispEdges" aria-hidden="true">
    <g stroke="#808080" strokeDasharray="1 1">
      {trunk !== "none" && <path d={`M10.500 0V${trunk === "full" ? 18 : 10}`} />}
      {branch && <path d="M11 10.500h10" />}
    </g>
    {sign && <><rect x="6.500" y="6.500" width="8" height="8" fill="#fff" stroke="#909090" /><path d={sign === "+" ? "M8 10.500h5M10.500 8v5" : "M8 10.500h5"} stroke="#2a4a9a" /></>}
  </svg>
);

const TitleBar = ({ children }: { children: ReactNode }) => (
  <PaneTitle><PaneTitleText>{children}</PaneTitleText><CloseMark aria-label="閉じる"><Cross8 /></CloseMark></PaneTitle>
);

const MarketWatch = () => (
  <Pane>
    <TitleBar>気配値表示: 00:35:09</TitleBar>
    <PaneBody>
      <Quotes>
        <thead><tr><QuoteHead $w={69} $left>通貨ペア</QuoteHead><QuoteHead $w={47}>Bid</QuoteHead><QuoteHead $w={46}>Ask</QuoteHead></tr></thead>
        <tbody>
          {quotes.map(([name, bid, ask, up], i) => (
            <tr key={i}>
              <QuoteCell><Symbol><ArrowMark up={up} />{name}</Symbol></QuoteCell>
              <QuoteCell $tone={up ? "up" : "down"}>{bid}</QuoteCell>
              <QuoteCell $tone={up ? "up" : "down"}>{ask}</QuoteCell>
            </tr>
          ))}
        </tbody>
      </Quotes>
      <ScrollBar>
        <ScrollArrow aria-label="上へ"><Chevron up /></ScrollArrow>
        <ScrollThumb />
        <ScrollArrow aria-label="下へ"><Chevron /></ScrollArrow>
      </ScrollBar>
    </PaneBody>
    <TabStrip><Tab $w={89} $active>通貨ペアリスト</Tab><Tab $w={87}>ティックチャート</Tab></TabStrip>
  </Pane>
);

const NavigatorPane = () => (
  <Pane $grow>
    <TitleBar>ナビゲーター</TitleBar>
    <PaneBody>
      <Tree>
        <TreeRow><RootIcon><AppIcon /></RootIcon><TreeText>Titan FX MT4</TreeText></TreeRow>
        <TreeRow><Guide branch sign="-" /><Users /><TreeText>口座</TreeText></TreeRow>
        <TreeRow><Guide /><Guide branch sign="+" /><Server /><TreeText>TitanFX-03</TreeText></TreeRow>
        <TreeRow><Guide /><Guide trunk="half" branch sign="-" /><Server /><TreeText>Titan</TreeText></TreeRow>
        <TreeRow><Guide /><Guide trunk="none" /><Guide trunk="half" branch /><User /></TreeRow>
        <TreeRow><Guide branch sign="+" /><FuncIcon /><TreeText>インディケータ</TreeText></TreeRow>
        <TreeRow><Guide branch sign="+" /><Expert /><TreeText>エキスパートアドバイザ</TreeText></TreeRow>
        <TreeRow><Guide trunk="half" branch sign="+" /><Script /><TreeText>スクリプト</TreeText></TreeRow>
      </Tree>
    </PaneBody>
    <Redaction />
    <TabStrip><Tab $w={45} $active>全般</Tab><Tab $w={72}>お気に入り</Tab></TabStrip>
  </Pane>
);

const SpinField = ({ id }: { id: string }) => (
  <Spinner>
    <SpinInput id={id} defaultValue="0.000" />
    <SpinButtons>
      <SpinButton type="button" aria-label="増やす"><Triangle up /></SpinButton>
      <SpinButton type="button" aria-label="減らす"><Triangle /></SpinButton>
    </SpinButtons>
  </Spinner>
);

const OrderDialog = () => (
  <Dialog role="dialog" aria-labelledby="order-title">
    <DialogTitle>
      <DialogName id="order-title">オーダーの発注 #75663894 buy 1.00 USDJPY で 107.221 sl: 0.000 tp: 0.000</DialogName>
      <DialogControls>
        <PlainButton aria-label="最小化"><Svg w={14} h={14}><path d="M2 7.500h10" stroke="#888" /></Svg></PlainButton>
        <PlainButton aria-label="最大化" disabled><Svg w={14} h={14}><path d="M2.500 2.500h9v9h-9z" stroke="#ddd" /></Svg></PlainButton>
        <PlainButton aria-label="閉じる"><Svg w={14} h={14}><path d="M2 2l10 10M12 2L2 12" stroke="#888" /></Svg></PlainButton>
      </DialogControls>
    </DialogTitle>
    <DialogBody onSubmit={(e) => e.preventDefault()}>
      <TickPane><TickChart /></TickPane>
      <OrderSide>
        <Fields>
          <FieldLabel $start htmlFor="symbol">通貨ペア：</FieldLabel>
          <Picker $wide><PickerSelect $small id="symbol"><option>USDJPY, US Dollar vs Japanese Yen</option></PickerSelect><Chevron /></Picker>
          <FieldLabel $start htmlFor="volume">数量：</FieldLabel>
          <Picker $plain><PickerSelect $small id="volume"><option>&nbsp;1.00</option></PickerSelect><Chevron /></Picker>
          <FieldLabel $start htmlFor="sl">決済逆指値(S/L)</FieldLabel>
          <SpinField id="sl" />
          <FieldLabel htmlFor="tp">決済指値(T/P)</FieldLabel>
          <SpinField id="tp" />
          <FieldLabel $start htmlFor="comment">コメント：</FieldLabel>
          <TextInput id="comment" />
          <FieldLabel $start htmlFor="kind">注文種別：</FieldLabel>
          <Picker $wide><PickerSelect id="kind"><option>成行注文</option></PickerSelect><Chevron /></Picker>
          <VolumeMarker />
        </Fields>
        <OrderGroup>
          <OrderLegend>成行注文</OrderLegend>
          <Quote>107.18<small>6</small> <Slash>/</Slash> 107.22<small>6</small></Quote>
          <DealRow>
            <DealButton type="button" $tone="#ff8080" $edge="#f06868">成行売り</DealButton>
            <DealButton type="button" $tone="#a0c0ff" $edge="#86a9f0">成行買い</DealButton>
          </DealRow>
          <CloseDeal>
            <DealButton type="button" $tone="#ffffa0" $edge="#f4ef88"><Latin>#75663894 buy 1.00 USDJPY</Latin> 成行決済</DealButton>
            <CloseMarker />
          </CloseDeal>
          <Caution>ご注意！ 成行注文は、市場状況によって約定価格が決まりますので、必ずしも提示<br />価格で約定するとは限りません!</Caution>
        </OrderGroup>
      </OrderSide>
    </DialogBody>
  </Dialog>
);

const StandardBar = () => (
  <ToolRow>
    <ToolBar>
      <Grip />
      <ToolButton $w={35} $menu aria-label="新規チャート"><NewChart /><Caret /></ToolButton>
      <ToolButton $w={35} $menu aria-label="プロファイル"><Profiles /><Caret /></ToolButton>
      <Divider />
      <ToolButton $pressed aria-label="気配値表示"><WatchIcon /></ToolButton>
      <ToolButton aria-label="データウィンドウ"><CrossCircle /></ToolButton>
      <ToolButton $pressed aria-label="ナビゲーター"><NavIcon /></ToolButton>
      <ToolButton $pressed aria-label="ターミナル"><TerminalIcon /></ToolButton>
      <ToolButton aria-label="ストラテジーテスター"><Tester /></ToolButton>
      <Divider />
      <ToolButton $w={78}><OrderIcon />新規注文</ToolButton>
      <ToolButton aria-label="MetaEditor"><Book /></ToolButton>
      <ToolButton aria-label="VPS"><Cloud /></ToolButton>
      <ToolButton aria-label="シグナル"><Signal /></ToolButton>
      <ToolButton $w={78}><Expert stop />自動売買</ToolButton>
    </ToolBar>
    <ToolBar>
      <Grip />
      <ToolButton aria-label="バーチャート"><BarsIcon /></ToolButton>
      <ToolButton $pressed aria-label="ローソク足"><CandleIcon /></ToolButton>
      <ToolButton aria-label="ラインチャート"><LineIcon /></ToolButton>
      <Divider />
      <ToolButton aria-label="拡大"><Lens plus /></ToolButton>
      <ToolButton aria-label="縮小"><Lens /></ToolButton>
      <ToolButton aria-label="整列"><Tiles /></ToolButton>
      <Divider />
      <ToolButton $pressed aria-label="自動スクロール"><ScrollIcon /></ToolButton>
      <ToolButton aria-label="チャートシフト"><ShiftIcon /></ToolButton>
      <Divider />
      <ToolButton $menu aria-label="インディケータリスト"><Indicators /><Caret /></ToolButton>
      <ToolButton $menu aria-label="時間足設定"><Clock /><Caret /></ToolButton>
      <ToolButton $menu aria-label="定型チャート"><Template /><Caret /></ToolButton>
    </ToolBar>
    <RowTools>
      <PlainButton aria-label="検索"><Search /></PlainButton>
      <PlainButton aria-label="チャット"><Chat /></PlainButton>
    </RowTools>
  </ToolRow>
);

const LineBar = () => (
  <ToolRow>
    <ToolBar>
      <Grip />
      <ToolButton $pressed aria-label="カーソル"><Cursor /></ToolButton>
      <ToolButton aria-label="クロスヘア"><Cross /></ToolButton>
      <Divider />
      <ToolButton aria-label="垂直線"><VLine /></ToolButton>
      <ToolButton aria-label="水平線"><HLine /></ToolButton>
      <ToolButton aria-label="トレンドライン"><Trend /></ToolButton>
      <ToolButton aria-label="チャネル"><Channel /></ToolButton>
      <ToolButton aria-label="フィボナッチ"><Fibo /></ToolButton>
      <ToolButton aria-label="テキスト"><TextIcon /></ToolButton>
      <ToolButton aria-label="ラベル"><LabelIcon /></ToolButton>
      <ToolButton $menu aria-label="矢印"><Arrows /><Caret /></ToolButton>
    </ToolBar>
    <ToolBar>
      <Grip />
      {["M1", "M5", "M15", "M30", "H1", "H4", "D1", "W1", "MN"].map((p) => (
        <PeriodButton key={p} $raised={p === "M1"} $pressed={p === "M15"}>{p}</PeriodButton>
      ))}
    </ToolBar>
  </ToolRow>
);

const TerminalPane = () => (
  <Terminal>
    <TerminalRail><CloseMark aria-label="閉じる"><Cross8 /></CloseMark><TerminalName>ターミナル</TerminalName></TerminalRail>
    <TerminalBody>
      <TradeArea>
        <Trades>
          <colgroup>{tradeColumns.map(([, w], i) => <col key={i} width={w} />)}</colgroup>
          <thead>
            <tr>{tradeColumns.map(([name], i) => <TradeHead key={i} $left={i === 0}>{name}{i === 0 && <SortMark>/</SortMark>}</TradeHead>)}</tr>
          </thead>
          <tbody>
            <tr>
              <TradeCell $left><CellContent><DocIcon />75663894</CellContent></TradeCell>
              {tradeValues.map((v, i) => <TradeCell key={i}>{v}</TradeCell>)}
              <TradeCell $last><CellContent $end>-32.65<Cross8 color="#a8b4c0" /></CellContent></TradeCell>
            </tr>
            <tr>
              <TotalCell colSpan={11}>
                <CellContent><BalanceIcon />{"残高: 49 889.37 USD  有効証拠金: 49 849.72  必要証拠金: 200.00  余剰証拠金: 49 649.72  証拠金維持率: 24924.86%"}</CellContent>
              </TotalCell>
              <TotalCell $right>-39.65</TotalCell>
            </tr>
          </tbody>
        </Trades>
      </TradeArea>
      <TabStrip>
        <Tab $w={45} $active>取引</Tab>
        {terminalTabs.map(([name, w, count]) => <Tab key={name} $w={w}>{name}{count && <TabCount>{count}</TabCount>}</Tab>)}
      </TabStrip>
    </TerminalBody>
  </Terminal>
);

export default function App() {
  return (
    <>
      <GlobalStyle />
      <Shell>
        <MenuBar>
          <MenuIcon><AppIcon /></MenuIcon>
          {menus.map(([name, w]) => <MenuItem key={name} $w={w}>{name}</MenuItem>)}
          <WindowButtons>
            <WindowButton aria-label="最小化"><Svg w={10} h={10}><path d="M2 8h6" stroke="#8499ab" strokeWidth="2" /></Svg></WindowButton>
            <WindowButton aria-label="元に戻す"><Svg w={10} h={10}><path d="M3.500 3V1.500h6v4H8M3 1.500h7" stroke="#8499ab" /><path d="M1.500 4.500h6v4h-6zM1 5h7" stroke="#8499ab" /></Svg></WindowButton>
            <WindowButton aria-label="閉じる"><Cross8 color="#8499ab" /></WindowButton>
          </WindowButtons>
        </MenuBar>
        <StandardBar />
        <LineBar />
        <Main>
          <Side><MarketWatch /><NavigatorPane /></Side>
          <ChartPane><PriceChart /><OrderDialog /></ChartPane>
        </Main>
        <TerminalPane />
        <StatusBar>
          <StatusCell>F1キーでヘルプが表示されます</StatusCell>
          <StatusCell $w={116}>Default</StatusCell>
          <StatusCell $w={102} /><StatusCell $w={71} /><StatusCell $w={71} /><StatusCell $w={68} /><StatusCell $w={69} /><StatusCell $w={66} />
          <StatusCell $w={147}><Traffic />922/3 kb<SizeGrip><Svg w={12} h={12}><path d="M1 12L12 1M5 12l7-7M9 12l3-3" stroke="#a0a0a0" /></Svg></SizeGrip></StatusCell>
        </StatusBar>
      </Shell>
    </>
  );
}
